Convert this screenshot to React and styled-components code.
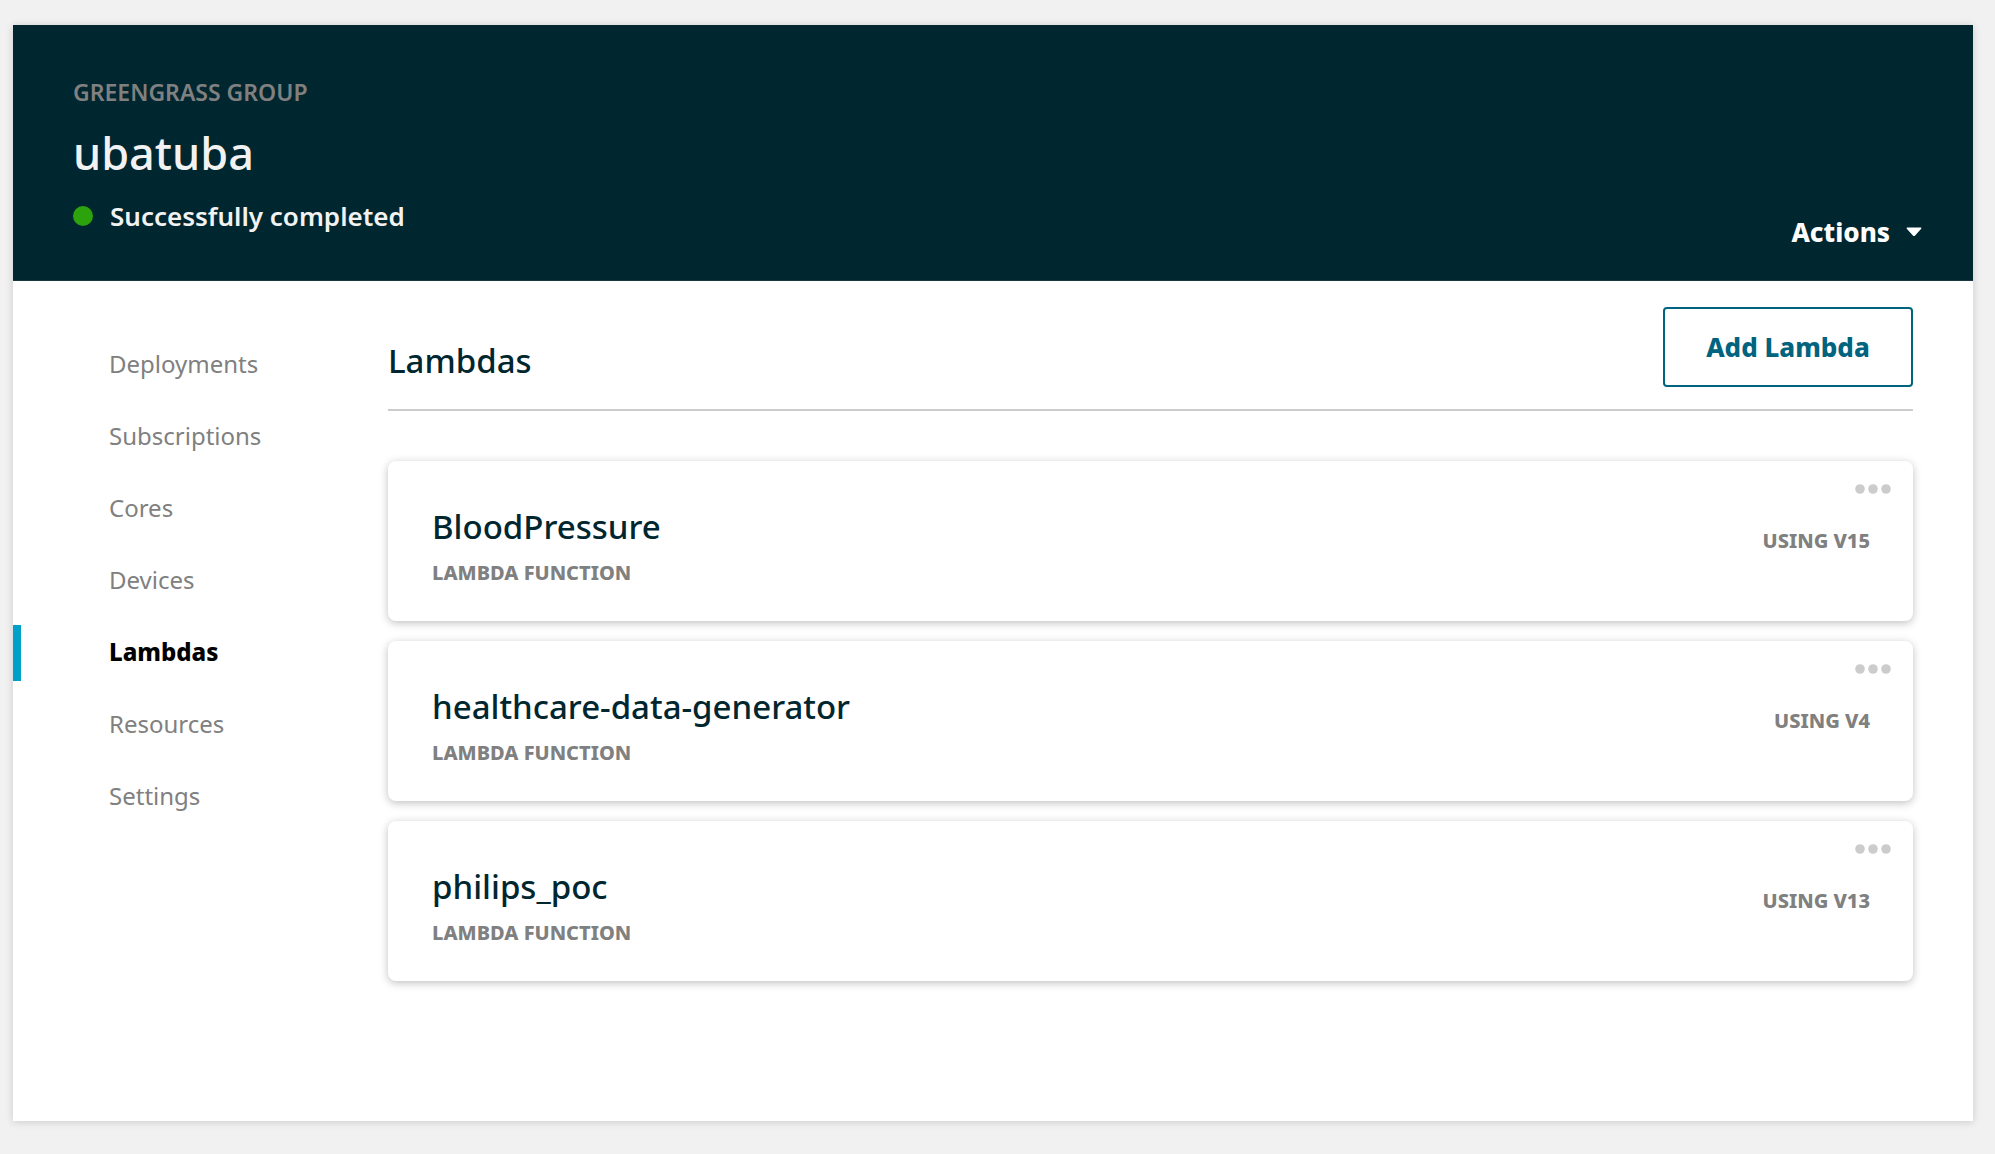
import React from "react";
import styled, { createGlobalStyle } from "styled-components";

const GlobalStyle = createGlobalStyle`
  *, *::before, *::after { box-sizing: border-box; }
  body {
    margin: 0;
    background: #f1f1f1;
    color: #00262f;
    font-family: "Noto Sans", "Open Sans", sans-serif;
  }
  button { font: inherit; cursor: pointer; }
  h1, h2, h3, p, ul { margin: 0; padding: 0; }
`;

const Page = styled.div`
  padding: 25px 22px 33px 13px;
`;

const Panel = styled.div`
  background: #fff;
  box-shadow: 0 1px 8px rgba(0, 0, 0, 0.16);
`;

const Header = styled.header`
  display: flex;
  justify-content: space-between;
  align-items: flex-end;
  padding: 51px 48px 28px 60px;
  background: #00262f;
  border-bottom: 1px solid #17383f;
  color: #f2f2f2;
`;

const GroupInfo = styled.div`
  display: flex;
  flex-direction: column;
  padding-bottom: 16px;
`;

const GroupKind = styled.p`
  color: #808080;
  font-size: 23px;
  font-weight: 600;
  line-height: 32px;
  text-transform: uppercase;
`;

const GroupName = styled.h1`
  margin-top: 13px;
  font-size: 45px;
  font-weight: 500;
  line-height: 64px;
`;

const Status = styled.p`
  display: flex;
  align-items: center;
  gap: 17px;
  margin-top: 11px;
  font-size: 26px;
  font-weight: 600;
  line-height: 40px;
`;

const StatusDot = styled.span`
  width: 20px;
  height: 20px;
  border-radius: 50%;
  background: #2ca30d;
`;

const ActionsButton = styled.button`
  display: flex;
  align-items: center;
  gap: 16px;
  padding: 0 3px;
  border: 0;
  background: none;
  color: #fff;
  && {
    font-size: 26px;
    font-weight: 800;
    line-height: 40px;
  }
`;

const Body = styled.div`
  display: flex;
`;

const SideNav = styled.nav`
  flex: 0 0 375px;
  padding-top: 56px;
`;

const NavList = styled.ul`
  display: flex;
  flex-direction: column;
  gap: 16px;
  list-style: none;
`;

const NavLink = styled.a`
  display: block;
  padding: 0 0 2px 88px;
  border-left: 8px solid ${(p) => (p.$active ? "#00a1c9" : "transparent")};
  color: ${(p) => (p.$active ? "#000" : "#808080")};
  font-size: 24px;
  font-weight: ${(p) => (p.$active ? 800 : 400)};
  line-height: 54px;
  text-decoration: none;
`;

const Main = styled.main`
  flex: 1;
  min-width: 0;
  padding: 26px 60px 140px 0;
`;

const SectionHead = styled.div`
  display: flex;
  justify-content: space-between;
  align-items: flex-end;
  padding-bottom: 22px;
  border-bottom: 2px solid #ccc;
`;

const SectionTitle = styled.h2`
  font-size: 33px;
  font-weight: 500;
  line-height: 52px;
`;

const AddButton = styled.button`
  min-width: 250px;
  padding: 0 32px;
  border: 2px solid #00647f;
  border-radius: 4px;
  background: #fff;
  color: #00647f;
  && {
    font-size: 26px;
    font-weight: 800;
    line-height: 76px;
  }
`;

const CardList = styled.ul`
  display: flex;
  flex-direction: column;
  gap: 20px;
  margin-top: 50px;
  list-style: none;
`;

const Card = styled.li`
  display: flex;
  justify-content: space-between;
  padding: 18px 22px 32px 44px;
  border-radius: 8px;
  background: #fff;
  box-shadow: 0 2px 8px rgba(0, 0, 0, 0.25);
`;

const CardText = styled.div`
  display: flex;
  flex-direction: column;
  gap: 8px;
  padding-top: 26px;
`;

const CardTitle = styled.h3`
  font-size: 33px;
  font-weight: 500;
  line-height: 44px;
`;

const Caption = styled.p`
  color: #808080;
  font-size: 20px;
  font-weight: 800;
  line-height: 32px;
  text-transform: uppercase;
`;

const CardSide = styled.div`
  display: flex;
  flex-direction: column;
  align-items: flex-end;
  gap: 26px;
`;

const VersionBox = styled.div`
  padding-right: 21px;
`;

const MoreButton = styled.button`
  display: flex;
  align-items: center;
  height: 20px;
  padding: 0;
  border: 0;
  background: none;
`;

const navItems = [
  "Deployments",
  "Subscriptions",
  "Cores",
  "Devices",
  "Lambdas",
  "Resources",
  "Settings",
];

const lambdas = [
  { name: "BloodPressure", version: "V15" },
  { name: "healthcare-data-generator", version: "V4" },
  { name: "philips_poc", version: "V13" },
];

function CaretIcon() {
  return (
    <svg width="16" height="10" viewBox="0 0 16 10" aria-hidden="true">
      <path
        d="M1.3 1.3h13.4L8.6 8a.8.8 0 0 1-1.2 0z"
        fill="#fff"
        stroke="#fff"
        strokeWidth="1.4"
        strokeLinejoin="round"
      />
    </svg>
  );
}

function DotsIcon() {
  return (
    <svg width="36" height="10" viewBox="0 0 36 10" fill="#ccc" aria-hidden="true">
      <circle cx="5" cy="5" r="4.8" />
      <circle cx="18" cy="5" r="4.8" />
      <circle cx="31" cy="5" r="4.8" />
    </svg>
  );
}

function LambdaCard({ name, version }) {
  return (
    <Card>
      <CardText>
        <CardTitle>{name}</CardTitle>
        <Caption>Lambda function</Caption>
      </CardText>
      <CardSide>
        <MoreButton type="button" aria-label={`More options for ${name}`}>
          <DotsIcon />
        </MoreButton>
        <VersionBox>
          <Caption>Using {version}</Caption>
        </VersionBox>
      </CardSide>
    </Card>
  );
}

export default function App() {
  return (
    <>
      <GlobalStyle />
      <Page>
        <Panel>
          <Header>
            <GroupInfo>
              <GroupKind>Greengrass group</GroupKind>
              <GroupName>ubatuba</GroupName>
              <Status>
                <StatusDot />
                Successfully completed
              </Status>
            </GroupInfo>
            <ActionsButton type="button" aria-haspopup="menu">
              Actions
              <CaretIcon />
            </ActionsButton>
          </Header>
          <Body>
            <SideNav>
              <NavList>
                {navItems.map((item) => (
                  <li key={item}>
                    <NavLink
                      href={`#${item.toLowerCase()}`}
                      $active={item === "Lambdas"}
                      aria-current={item === "Lambdas" ? "page" : undefined}
                    >
                      {item}
                    </NavLink>
                  </li>
                ))}
              </NavList>
            </SideNav>
            <Main>
              <SectionHead>
                <SectionTitle>Lambdas</SectionTitle>
                <AddButton type="button">Add Lambda</AddButton>
              </SectionHead>
              <CardList>
                {lambdas.map((l) => (
                  <LambdaCard key={l.name} {...l} />
                ))}
              </CardList>
            </Main>
          </Body>
        </Panel>
      </Page>
    </>
  );
}
